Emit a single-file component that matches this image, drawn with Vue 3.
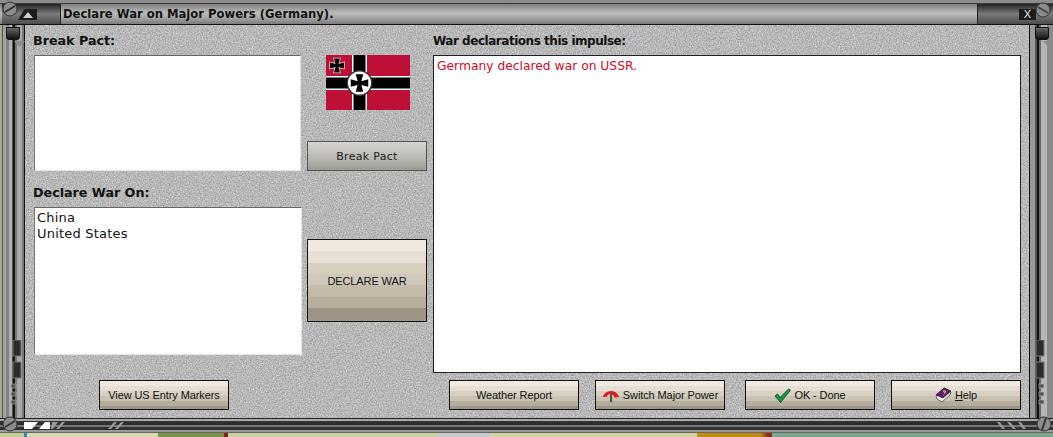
<script setup>
const footerButtons = ['Weather Report', 'Switch Major Power', 'OK - Done', 'Help']
const ironCross = 'M-1.5-1.5L-3-7H3L1.5-1.5L7-3V3L1.5 1.5L3 7H-3L-1.5 1.5L-7 3V-3Z'
</script>

<template>
  <div class="window">
    <div class="titlebar">
      <div class="cap cap--left"><span class="tri"></span></div>
      <div class="title">Declare War on Major Powers (Germany).</div>
      <div class="cap cap--right"><span class="close">X</span></div>
    </div>

    <div class="middle">
      <div class="rail rail--left">
        <span class="knob"></span>
        <svg class="rail-detail" width="12" height="70" viewBox="0 0 12 70">
          <path d="M3 0h8v16H3zM3 22h8v16H3z" fill="#2c2c2c" stroke="#777" />
          <path d="M1 44h5v4H1zM1 52h5v4H1zM1 60h5v4H1z" fill="#555" stroke="#bbb" stroke-width="0.600" />
        </svg>
      </div>
      <div class="body">
        <svg class="noise" width="100%" height="100%" aria-hidden="true">
          <filter id="grain" x="0" y="0" width="100%" height="100%" color-interpolation-filters="sRGB">
            <feTurbulence type="fractalNoise" baseFrequency="0.7" numOctaves="2" seed="4" />
            <feColorMatrix type="matrix" values="0.28 0.28 0 0 0.44  0.28 0.28 0 0 0.44  0.28 0.28 0 0 0.44  0 0 0 0 1" />
          </filter>
          <rect width="100%" height="100%" filter="url(#grain)" />
        </svg>

        <div class="col col--left">
          <div class="label label--pact">Break Pact:</div>
          <div class="list list--pact"></div>
          <div class="label label--pact">Declare War On:</div>
          <div class="list list--declare">
            <div>China</div>
            <div>United States</div>
          </div>
          <button class="btn btn--markers">View US Entry Markers</button>
        </div>

        <div class="col col--mid">
          <svg class="flag" width="84" height="55" viewBox="0 0 84 55">
            <rect width="84" height="55" fill="#be0f36" />
            <rect x="26" width="15" height="55" fill="#fff" />
            <rect y="21" width="84" height="14" fill="#fff" />
            <rect x="27.5" width="12" height="55" fill="#000" />
            <rect y="22.5" width="84" height="11" fill="#000" />
            <circle cx="33.5" cy="28" r="13" fill="#333" />
            <circle cx="33.5" cy="28" r="11.5" fill="#fff" />
            <path :d="ironCross" fill="#000" transform="translate(33.500 28) scale(1.250)" />
            <path :d="ironCross" fill="#000" stroke="#ecd4d8" stroke-width="1.400" paint-order="stroke" transform="translate(11 10.500)" />
          </svg>
          <button class="btn btn--pact">Break Pact</button>
          <button class="btn btn--declare">DECLARE WAR</button>
        </div>

        <div class="col col--right">
          <div class="label label--log">War declarations this impulse:</div>
          <div class="list list--log">Germany declared war on USSR.</div>
          <div class="footer">
            <button class="btn">{{ footerButtons[0] }}</button>
            <button class="btn btn--switch">
              <svg width="18" height="14" viewBox="0 0 18 14">
                <path d="M1 9C3 2 13 1 16 7l1.500 2-5 .5C11 5 6 5 4.500 9z" fill="#d8201c" />
                <path d="M9 6v8" stroke="#111" stroke-width="1.300" />
              </svg>
              {{ footerButtons[1] }}
            </button>
            <button class="btn btn--ok">
              <svg width="17" height="15" viewBox="0 0 17 15">
                <path d="M1 8l2.500-2 2.500 3.500L14.500 1l2 1.200L6.500 14.500z" fill="#0d9a3a" stroke="#0b3f2a" stroke-width="0.800" />
              </svg>
              {{ footerButtons[2] }}
            </button>
            <button class="btn btn--help">
              <svg width="17" height="16" viewBox="0 0 17 16">
                <path d="M1 9L9 1l7 4-1 3-8 7-5-3z" fill="#eee" stroke="#333" stroke-width="0.700" />
                <path d="M1 8L9 1l7 3-8 7z" fill="#5b1a6e" stroke="#2a0a33" stroke-width="0.700" />
                <path d="M8 4.500c1-1 3-.5 2.500.7L9 6.500M8.300 8.200l.4-.3" fill="none" stroke="#f0c020" stroke-width="1.200" />
              </svg>
              <span><u>H</u>elp</span>
            </button>
          </div>
        </div>
      </div>
      <div class="rail rail--right">
        <span class="knob"></span>
        <svg class="rail-detail" width="12" height="70" viewBox="0 0 12 70">
          <path d="M3 0h8v16H3zM3 22h8v16H3z" fill="#2c2c2c" stroke="#777" />
          <path d="M6 44h5v4H6zM6 52h5v4H6zM6 60h5v4H6z" fill="#555" stroke="#bbb" stroke-width="0.600" />
        </svg>
      </div>
    </div>

    <div class="bottombar">
      <svg class="tabs" width="110" height="8" viewBox="0 0 110 8">
        <path d="M0 0h14l-6 7H0z" fill="#fff" />
        <path d="M21 0h5v7h-11z" fill="#fff" />
        <path d="M27 7l1-7h6l-5 7zM32 7l6-7h3l-6 7zM84 7l6-7h3l-6 7zM91 7l6-7h3l-6 7z" fill="#999" />
      </svg>
      <svg class="slash" width="42" height="8" viewBox="0 0 42 8">
        <path d="M0 0h3l5 7H5zM10 0h3l6 7h-3zM21 0h3l5 7h-3z" fill="#999" />
      </svg>
    </div>
    <div class="map"></div>

    <svg class="screw screw--tl" width="16" height="16" viewBox="0 0 16 16"><circle cx="8" cy="8" r="7" fill="#8c8c8c" stroke="#333" /><path d="M3 11L13 5" stroke="#333" stroke-width="2" /></svg>
    <svg class="screw screw--tr" width="16" height="16" viewBox="0 0 16 16"><circle cx="8" cy="8" r="7" fill="#8c8c8c" stroke="#333" /><path d="M3 5L13 11" stroke="#444" stroke-width="2" /></svg>
    <svg class="screw screw--bl" width="16" height="16" viewBox="0 0 16 16"><circle cx="8" cy="8" r="7" fill="#8c8c8c" stroke="#333" /><path d="M3 11L13 5" stroke="#333" stroke-width="2" /></svg>
    <svg class="screw screw--br" width="16" height="16" viewBox="0 0 16 16"><circle cx="8" cy="8" r="7" fill="#8c8c8c" stroke="#333" /><path d="M6 14L10 2" stroke="#333" stroke-width="2" /></svg>
  </div>
</template>

<style scoped>
.window {
  position: relative;
  width: 1053px;
  height: 437px;
  overflow: hidden;
  display: flex;
  flex-direction: column;
  background: #8a9a6a;
  font-family: "DejaVu Sans", sans-serif;
  color: #111;
}

.titlebar {
  height: 25px;
  box-sizing: border-box;
  padding-top: 4px;
  display: flex;
  background: linear-gradient(#8c8c8c 0 3px, #3a3a3a 3px 4px, #7d7d7d 4px, #9a9a9a 8px, #bcbcbc 13px, #a4a4a4 18px, #7c7c7c 24px);
  border-bottom: 1px solid #111;
}

.cap {
  width: 58px;
  height: 20px;
  position: relative;
  background: linear-gradient(#242424, #7c7c7c 50%, #4c4c4c);
  flex: none;
}

.cap--left {
  margin-left: 2px;
  border-right: 1px solid #222;
}

.cap--right {
  margin-left: auto;
  width: 75px;
  border-left: 1px solid #222;
}

.tri {
  position: absolute;
  left: 16px;
  top: 5px;
  width: 19px;
  height: 11px;
  background: #1c1c1c;
  clip-path: polygon(35% 0, 100% 0, 100% 100%, 0 100%);
}

.tri::after {
  content: "";
  position: absolute;
  left: 5px;
  top: 3px;
  border-left: 5px solid transparent;
  border-right: 5px solid transparent;
  border-bottom: 6px solid #ccc;
}

.close {
  position: absolute;
  left: 41px;
  top: 5px;
  width: 17px;
  height: 11px;
  background: #1c1c1c;
  color: #eee;
  font: 11px/11px "Liberation Sans", sans-serif;
  text-align: center;
}

.title {
  margin-left: 2px;
  font-size: 11.600px;
  font-weight: 700;
  line-height: 20px;
  white-space: nowrap;
}

.middle {
  height: 393px;
  display: flex;
}

.rail {
  position: relative;
  flex: none;
}

.rail--left {
  width: 25px;
  background: linear-gradient(90deg, #a3ad86 0 2px, #555 2px 3px, #a0a0a0 3px 6px, #828282 6px 9px, #b0b0b0 9px 12px, #555 12px 13px, #111 13px 15px, #777 15px 17px, #a8a8a8 17px 22px, #777 22px 24px, #111 24px 25px);
}

.rail--right {
  width: 24px;
  background: linear-gradient(90deg, #111 0 1px, #999 1px 6px, #555 6px 8px, #111 8px 10px, #666 10px 12px, #b5b5b5 12px 18px, #8a8a8a 18px 24px);
}

.knob {
  position: absolute;
  top: 2px;
  left: 6px;
  width: 14px;
  height: 13px;
  border-radius: 0 0 3px 3px;
  background: linear-gradient(#666, #2a2a2a 70%, #111);
  border: 1px solid #111;
  box-sizing: border-box;
}

.knob::after {
  content: "";
  position: absolute;
  left: 7px;
  top: 13px;
  width: 11px;
  height: 5px;
  background: #8a8a8a;
  clip-path: polygon(0 0, 100% 0, 60% 100%, 40% 100%);
}

.rail-detail {
  position: absolute;
  left: 10px;
  top: 315px;
}

.rail--right .rail-detail {
  left: 4px;
}

.body {
  position: relative;
  flex: 1;
  display: flex;
  gap: 6px;
  padding: 8px 0 0 8px;
  overflow: hidden;
  background: #aaa;
  box-shadow: inset 0 0 0 1px #333;
}

.noise {
  position: absolute;
  inset: 0;
}

.col {
  position: relative;
  display: flex;
  flex-direction: column;
}

.col--left {
  width: 269px;
}

.col--mid {
  width: 120px;
  padding-top: 22px;
  margin-left: -1px;
}

.col--right {
  width: 588px;
}

.label {
  height: 16px;
  margin-bottom: 6px;
  font-weight: 700;
  line-height: 16px;
  white-space: nowrap;
}

.label--pact {
  font-size: 12.700px;
}

.label--log {
  font-size: 12px;
  letter-spacing: -0.47px;
}

.list {
  box-sizing: border-box;
  background: #fff;
  border: 1px solid #e4e4e4;
  border-top-color: #666;
  border-left-color: #777;
  padding: 2px 3px;
  line-height: 16px;
}

.list--pact {
  height: 116px;
  width: 267px;
  margin-bottom: 14px;
  margin-left: 1px;
}

.list--declare {
  height: 148px;
  width: 268px;
  margin-bottom: 25px;
  margin-left: 1px;
  padding-left: 2px;
  font-size: 13px;
  letter-spacing: 0.2px;
}

.list--log {
  height: 318px;
  margin-bottom: 7px;
  color: #d8091f;
  border: 1px solid #222;
  font-size: 12.300px;
}

.btn {
  height: 30px;
  width: 130px;
  padding: 0;
  flex: none;
  display: flex;
  align-items: center;
  justify-content: center;
  gap: 3px;
  box-sizing: border-box;
  border: 1px solid #111;
  background: linear-gradient(#f0e9e0 0 18%, #e6ded4 18% 36%, #d8d1c2 36% 54%, #c9c2b2 54% 72%, #b5ad9b 72% 88%, #9d9586 88%);
  font: 11px "Liberation Sans", sans-serif;
  letter-spacing: -0.1px;
  color: #111;
  white-space: nowrap;
}

.btn--markers {
  margin-left: 66px;
}

.flag {
  margin-left: 19px;
}

.btn--pact {
  width: 120px;
  margin-top: 31px;
  background: linear-gradient(#d4d4d0, #b8b6b0 60%, #9c9a94);
  border-color: #555;
  font: 11px "DejaVu Sans", sans-serif;
  letter-spacing: 0.3px;
  color: #222;
}

.btn--declare {
  width: 120px;
  height: 83px;
  margin-top: 68px;
  background: linear-gradient(#f0e9df 0 14%, #e8e0d6 14% 28%, #d6cfbe 28% 42%, #cfc8bb 42% 56%, #c3bca9 56% 70%, #b6ae9b 70% 84%, #9d9586 84%);
}

.footer {
  display: flex;
  justify-content: flex-end;
}

.footer .btn + .btn {
  margin-left: 16px;
}

.footer .btn + .btn--ok {
  margin-left: 20px;
}

.bottombar {
  position: relative;
  height: 15px;
  box-sizing: border-box;
  background: linear-gradient(#222 0 1px, #a8a8a8 1px 3px, #333 3px 5px, #2c2c2c 5px 7px, #777 7px 9px, #2f2f2f 9px 12px, #999 12px 14px, #666 14px);
}

.tabs {
  position: absolute;
  left: 24px;
  top: 4px;
}

.slash {
  position: absolute;
  right: 14px;
  top: 4px;
}

.map {
  height: 4px;
  background: linear-gradient(90deg, #c8cf92 0 24px, #3f86b8 24px 27px, #d9d8ae 27px 158px, #74954a 158px 224px, #8e1a14 224px 228px, #cbd0a0 228px 438px, #c9c9c9 438px 490px, #d0d2a0 490px 697px, #c58a10 697px 760px, #8e2a14 768px 772px, #7aa88a 772px 1053px);
}

.screw {
  position: absolute;
}

.screw--tl {
  left: 2px;
  top: 1px;
}

.screw--tr {
  right: 2px;
  top: 2px;
}

.screw--bl {
  left: 2px;
  top: 416px;
}

.screw--br {
  right: 1px;
  top: 416px;
}
</style>
